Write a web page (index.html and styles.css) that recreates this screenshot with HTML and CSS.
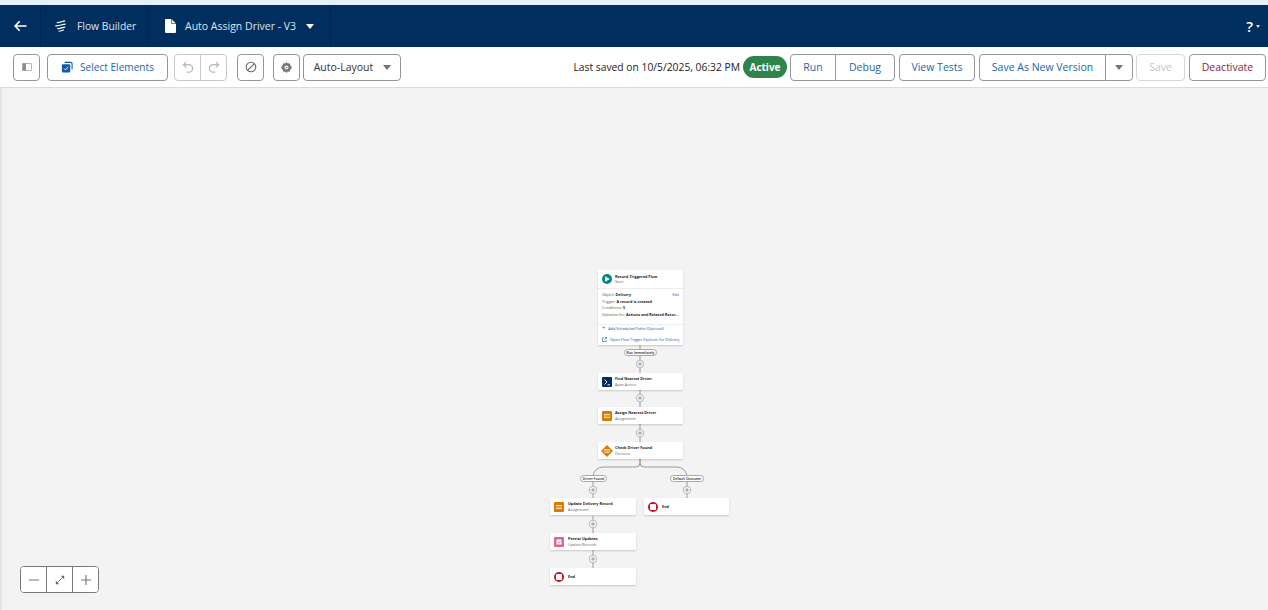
FILE: index.html
```html
<!DOCTYPE html>
<html lang="en">
<head>
    <meta charset="UTF-8">
    <title>Flow Builder</title>
    <link rel="stylesheet" href="styles.css">
</head>
<body>
    <header class="topbar">
        <div class="top-cell back-cell">
            <svg class="ico-back" viewBox="0 0 14 12"><path d="M6 1 1.2 6 6 11M1.5 6H13.500" fill="none" stroke="#fff" stroke-width="1.700"/></svg>
        </div>
        <div class="top-cell app-cell">
            <svg class="ico-flow" viewBox="0 0 14 14"><path d="M3 3.200C6 4 9 1.500 12 1.500M1.500 6.600C5 7.600 8.500 5 12.500 5M3.500 9.600C6 10.500 9 8.200 12 8.200M5 12.600C7 13 9 11.400 10.500 11.200" fill="none" stroke="#fff" stroke-width="1.300"/></svg>
            <span>Flow Builder</span>
        </div>
        <div class="top-cell doc-cell">
            <svg class="ico-doc" viewBox="0 0 11 14"><path d="M0 1a1 1 0 0 1 1-1h5.500L11 4.500V13a1 1 0 0 1-1 1H1a1 1 0 0 1-1-1Z" fill="#fff"/><path d="M6.500 0v4.500H11" fill="none" stroke="#002f5f" stroke-width=".6"/></svg>
            <span>Auto Assign Driver - V3</span>
            <i class="caret caret-white"></i>
        </div>
        <div class="help">?<i class="caret-small"></i></div>
    </header>

    <div class="toolbar">
        <button class="btn btn-icon">
            <svg class="ico-panel" viewBox="0 0 10 8"><rect x=".4" y=".4" width="9.200" height="7.200" rx=".8" fill="#fff" stroke="#9a9a9a" stroke-width=".8"/><rect x=".4" y=".4" width="3.600" height="7.200" fill="#8f8f8f"/></svg>
        </button>
        <button class="btn btn-select">
            <svg class="ico-13" viewBox="0 0 13 13"><path d="M4 1.500h6.500a1.500 1.500 0 0 1 1.500 1.500v6" fill="none" stroke="#0b5cab" stroke-width="1.200"/><rect x="1" y="3.500" width="9" height="9" rx="1.200" fill="#0b5cab"/><path d="M3.300 8 5 9.700 7.800 6.400" fill="none" stroke="#fff" stroke-width="1"/></svg>
            Select Elements
        </button>
        <div class="btn-group undo-group">
            <button class="btn btn-icon is-disabled">
                <svg class="ico-13" viewBox="0 0 13 13"><path d="M4.500 1 1.500 4l3 3M2 4h5.500a4 4 0 0 1 0 8H5" fill="none" stroke="#b8b8b8" stroke-width="1.300"/></svg>
            </button>
            <button class="btn btn-icon is-disabled">
                <svg class="ico-13" viewBox="0 0 13 13"><path d="M8.500 1l3 3-3 3M11 4H5.500a4 4 0 0 0 0 8H8" fill="none" stroke="#b8b8b8" stroke-width="1.300"/></svg>
            </button>
        </div>
        <button class="btn btn-icon btn-stop">
            <svg class="ico-13" viewBox="0 0 13 13"><circle cx="6.500" cy="6.500" r="5.200" fill="none" stroke="#666" stroke-width="1.200"/><path d="M3 10 10 3" stroke="#666" stroke-width="1.200"/></svg>
        </button>
        <button class="btn btn-icon btn-gear">
            <svg class="ico-gear" viewBox="0 0 13 13"><path d="M6.500 0 8 1.800l2.300-.4.700 2.300L13 6.500l-2 2.800-.7 2.300L8 11.200 6.500 13 5 11.200l-2.300.4L2 9.300 0 6.500l2-2.800.7-2.300 2.300.4Z" fill="#777"/><circle cx="6.500" cy="6.500" r="2.300" fill="#fff"/><circle cx="6.500" cy="6.500" r="1" fill="#777"/></svg>
        </button>
        <button class="btn layout-select">Auto-Layout<i class="caret caret-grey"></i></button>

        <div class="toolbar-right">
            <span class="saved">Last saved on 10/5/2025, 06:32 PM</span>
            <span class="status-pill">Active</span>
            <div class="btn-group run-group">
                <button class="btn btn-link btn-run">Run</button>
                <button class="btn btn-link btn-debug">Debug</button>
            </div>
            <button class="btn btn-link btn-tests">View Tests</button>
            <div class="btn-group version-group">
                <button class="btn btn-link btn-version">Save As New Version</button>
                <button class="btn btn-link btn-more"><i class="caret caret-grey"></i></button>
            </div>
            <button class="btn btn-save">Save</button>
            <button class="btn btn-deactivate">Deactivate</button>
        </div>
    </div>

    <main class="canvas">
        <div class="flow">
            <svg class="wires" viewBox="0 0 180 316">
                <g fill="none" stroke="#9a9a9a" stroke-width="1">
                    <path d="M90 75V172"/>
                    <path d="M90 189V193Q90 197 86 197H53a10 10 0 0 0-10 10V228"/>
                    <path d="M90 189V193Q90 197 94 197H127a10 10 0 0 1 10 10V228"/>
                    <path d="M43 246V298"/>
                </g>
                <g class="plus-dots">
                    <circle cx="90" cy="94" r="3.800"/><path d="M88 94h4M90 92v4"/>
                    <circle cx="90" cy="128" r="3.800"/><path d="M88 128h4M90 126v4"/>
                    <circle cx="90" cy="163" r="3.800"/><path d="M88 163h4M90 161v4"/>
                    <circle cx="43" cy="220" r="3.800"/><path d="M41 220h4M43 218v4"/>
                    <circle cx="137" cy="220" r="3.800"/><path d="M135 220h4M137 218v4"/>
                    <circle cx="43" cy="254" r="3.800"/><path d="M41 254h4M43 252v4"/>
                    <circle cx="43" cy="289" r="3.800"/><path d="M41 289h4M43 287v4"/>
                </g>
            </svg>

            <div class="node trigger-card">
                <div class="trigger-head">
                    <span class="round-ico teal"><svg viewBox="0 0 10 10"><path d="M3.200 2.200 7.800 5 3.200 7.800Z" fill="#fff"/></svg></span>
                    <div><div class="node-title">Record-Triggered Flow</div><div class="node-sub">Start</div></div>
                </div>
                <div class="trigger-body">
                    <div class="trigger-row"><span class="muted">Object:</span> <b>Delivery</b><span class="edit">Edit</span></div>
                    <div class="trigger-row"><span class="muted">Trigger:</span> <b>A record is created</b></div>
                    <div class="trigger-row"><span class="muted">Conditions:</span> <b>5</b></div>
                    <div class="trigger-row"><span class="muted">Optimize for:</span> <b>Actions and Related Recor...</b></div>
                </div>
                <div class="trigger-link link-paths"><span class="link-plus">+</span> Add Scheduled Paths (Optional)</div>
                <div class="trigger-link link-explorer">
                    <svg class="ico-open" viewBox="0 0 6 6"><path d="M2.500 1H.6v4.400H5V3.500M3 3 5.500.5M3.800.5h1.700v1.700" fill="none" stroke="#0b5cab" stroke-width=".7"/></svg>
                    Open Flow Trigger Explorer for Delivery
                </div>
            </div>

            <div class="pill-label pill-run">Run Immediately</div>

            <div class="node step n-find">
                <span class="square-ico navy"><svg viewBox="0 0 10 10"><path d="M2.500 2.500 5 5 2.500 7.500M5.500 7.800H8" fill="none" stroke="#fff" stroke-width=".9"/></svg></span>
                <div><div class="node-title">Find Nearest Driver</div><div class="node-sub">Apex Action</div></div>
            </div>
            <div class="node step n-assign">
                <span class="square-ico orange"><svg viewBox="0 0 10 10"><path d="M2 3.800H8M2 6.200H8" stroke="#fff" stroke-width="1.100"/></svg></span>
                <div><div class="node-title">Assign Nearest Driver</div><div class="node-sub">Assignment</div></div>
            </div>
            <div class="node step n-check">
                <span class="diamond-ico"><svg viewBox="0 0 12 12"><path d="M6 0 12 6 6 12 0 6Z" fill="#dd7a01"/><path d="M3 4.500H9M2.500 6H9.500M3.500 7.500H8.500" stroke="#fff" stroke-width=".7"/></svg></span>
                <div><div class="node-title">Check Driver Found</div><div class="node-sub">Decision</div></div>
            </div>

            <div class="pill-label pill-found">Driver Found</div>
            <div class="pill-label pill-default">Default Outcome</div>

            <div class="node step n-update">
                <span class="square-ico orange"><svg viewBox="0 0 10 10"><path d="M2 3.800H8M2 6.200H8" stroke="#fff" stroke-width="1.100"/></svg></span>
                <div><div class="node-title">Update Delivery Record</div><div class="node-sub">Assignment</div></div>
            </div>
            <div class="node step n-end-right">
                <span class="round-ico stop"><i></i></span>
                <div class="node-title">End</div>
            </div>
            <div class="node step n-persist">
                <span class="square-ico pink"><svg viewBox="0 0 10 10"><rect x="2.500" y="2.500" width="5" height="5" rx=".6" fill="#fff"/><path d="M3.800 5.100 5 6.200 6.400 4" fill="none" stroke="#e3609b" stroke-width=".7"/></svg></span>
                <div><div class="node-title">Persist Updates</div><div class="node-sub">Update Records</div></div>
            </div>
            <div class="node step n-end">
                <span class="round-ico stop"><i></i></span>
                <div class="node-title">End</div>
            </div>
        </div>

        <div class="zoom-controls">
            <button class="zoom-btn"><svg viewBox="0 0 12 12"><path d="M1 6H11" stroke="#777" stroke-width="1.200"/></svg></button>
            <button class="zoom-btn"><svg class="zoom-fit" viewBox="0 0 12 12"><path d="M7 1h4v4ZM5 11H1V7Z" fill="#666"/><path d="M3 9 9 3" stroke="#666"/></svg></button>
            <button class="zoom-btn"><svg viewBox="0 0 12 12"><path d="M1 6H11M6 1V11" stroke="#777" stroke-width="1.200"/></svg></button>
        </div>
    </main>
</body>
</html>
```

FILE: styles.css
```css
* { box-sizing: border-box; }
html, body { height: 100%; }
body { margin: 0; height: 610px; overflow: hidden; display: flex; flex-direction: column; font-family: "Open Sans", "Noto Sans", sans-serif; background: #f3f3f3; border-top: 5px solid #e3f1fb; color: #181818; }
button { font-family: inherit; margin: 0; }

/* top navy bar */
.topbar { height: 42px; background: #002f5f; color: #dfe6ee; display: flex; align-items: stretch; font-size: 10.300px; flex: none; }
.top-cell { display: flex; align-items: center; border-right: 1px solid #00264d; }
.back-cell { width: 41px; padding-left: 14px; }
.app-cell { width: 108px; padding-left: 13px; gap: 10px; }
.doc-cell { width: 182px; padding-left: 16px; }
.doc-cell span { margin-left: 9px; font-size: 10.500px; }
.ico-back { width: 13px; height: 12px; }
.ico-flow { width: 13px; height: 14px; }
.ico-doc { width: 11px; height: 14px; }
.caret { display: inline-block; width: 0; height: 0; border-left: 4.500px solid transparent; border-right: 4.500px solid transparent; border-top: 5.500px solid #fff; }
.caret-white { margin-left: 10px; }
.caret-grey { border-top-color: #747474; }
.help { margin-left: auto; padding-right: 8px; display: flex; align-items: center; gap: 3px; font-size: 15px; font-weight: 600; color: #fff; }
.caret-small { width: 0; height: 0; border-left: 2px solid transparent; border-right: 2px solid transparent; border-top: 3px solid #ddd; }

/* toolbar */
.toolbar { height: 41px; flex: none; background: #fff; border-bottom: 1px solid #dcdcdc; display: flex; align-items: center; padding: 0 2px 0 13px; }
.btn { height: 27px; background: #fff; border: 1px solid #969696; border-radius: 4px; font-size: 10.500px; padding: 0; display: flex; align-items: center; justify-content: center; color: #1d66ad; }
.btn-icon { width: 27px; }
.ico-13 { width: 12px; height: 12px; }
.ico-panel { width: 10px; height: 8px; }
.ico-gear { width: 11px; height: 11px; }
.btn-select { width: 121px; margin-left: 7px; gap: 7px; font-size: 10.100px; }
.btn-group { display: flex; }
.btn-group .btn:first-child { border-radius: 4px 0 0 4px; }
.btn-group .btn:last-child { border-radius: 0 4px 4px 0; margin-left: -1px; }
.undo-group { margin-left: 6px; }
.is-disabled { border-color: #c9c9c9; }
.btn-stop { margin-left: 10px; }
.btn-gear { margin-left: 9px; }
.layout-select { width: 98px; margin-left: 3px; color: #333; gap: 10px; padding-left: 1px; }
.toolbar-right { margin-left: auto; display: flex; align-items: center; }
.saved { font-size: 10.300px; color: #222; margin-right: 3px; white-space: nowrap; }
.status-pill { width: 44px; height: 22px; border-radius: 11px; background: #2e844a; color: #fff; font-size: 10px; font-weight: 700; display: flex; align-items: center; justify-content: center; }
.run-group { margin-left: 3px; }
.btn-run { width: 46px; }
.btn-debug { width: 60px; }
.btn-tests { width: 76px; margin-left: 4px; }
.version-group { margin-left: 4px; }
.btn-version { width: 127px; }
.btn-more { width: 28px; }
.btn-save { width: 49px; margin-left: 3px; color: #c4c4c4; border-color: #d8d8d8; }
.btn-deactivate { width: 77px; margin-left: 4px; color: #8e1b3a; }

/* canvas */
.canvas { flex: 1; position: relative; background: #f3f3f3; border-left: 2px solid #e4e4e4; }
.flow { position: absolute; left: 548px; top: 182px; width: 180px; height: 316px; }
.wires { position: absolute; left: 0; top: 0; width: 180px; height: 316px; }
.plus-dots circle { fill: #f3f3f3; stroke: #8c98a5; stroke-width: .6; }
.plus-dots path { stroke: #555; stroke-width: .5; }

.node { position: absolute; background: #fff; box-shadow: 0 1px 2px rgba(0, 0, 0, .18); border-radius: 1px; font-size: 3.800px; line-height: 5.500px; color: #181818; }
.node-title { font-weight: 700; white-space: nowrap; }
.node-sub { color: #666; white-space: nowrap; }
.step { width: 86px; height: 17px; display: flex; align-items: center; gap: 4px; padding-left: 4px; }

.trigger-card { left: 48px; top: 0; width: 85px; height: 75px; }
.trigger-head { height: 19px; display: flex; align-items: center; gap: 3px; padding: 0 4px; border-bottom: 1px solid #ececec; }
.trigger-body { padding: 3px 4px 0; height: 36px; display: flex; flex-direction: column; border-bottom: 1px solid #ececec; }
.trigger-row { height: 6.700px; white-space: nowrap; position: relative; }
.trigger-row b { color: #181818; }
.muted { color: #555; }
.edit { position: absolute; right: 0; color: #0b5cab; }
.trigger-link { color: #0b5cab; white-space: nowrap; display: flex; align-items: center; gap: 3px; }
.link-paths { margin-top: 1px; padding-left: 4px; }
.link-plus { font-size: 5.500px; }
.link-explorer { margin-top: 5px; padding-left: 4px; }
.ico-open { width: 5px; height: 5px; flex: none; }

.round-ico { width: 10px; height: 10px; border-radius: 50%; flex: none; display: flex; align-items: center; justify-content: center; }
.round-ico svg { width: 10px; height: 10px; }
.teal { background: #06857a; }
.stop { background: #c8102e; }
.stop i { width: 6px; height: 6px; background: #fff; border-radius: 1px; }
.square-ico { width: 10px; height: 10px; border-radius: 1px; flex: none; }
.square-ico svg { width: 10px; height: 10px; display: block; }
.navy { background: #032d60; }
.orange { background: #dd7a01; }
.pink { background: #e3609b; }
.diamond-ico { width: 12px; height: 12px; margin-left: -1px; margin-right: -1px; flex: none; }
.diamond-ico svg { width: 12px; height: 12px; display: block; }

.n-find { left: 48px; top: 103px; width: 85px; gap: 3px; }
.n-assign { left: 48px; top: 137px; width: 85px; gap: 3px; }
.n-check { left: 48px; top: 172px; width: 85px; gap: 3px; }
.n-update { left: 0; top: 228px; }
.n-end-right { left: 94px; top: 228px; width: 85px; }
.n-persist { left: 0; top: 263px; }
.n-end { left: 0; top: 298px; }

.pill-label { position: absolute; height: 7px; background: #fff; border: .6px solid #a8a8a8; border-radius: 4px; font-size: 3.400px; line-height: 6px; text-align: center; white-space: nowrap; color: #181818; font-weight: 600; }
.pill-run { left: 74px; top: 79px; width: 33px; }
.pill-found { left: 30px; top: 205px; width: 27px; }
.pill-default { left: 120px; top: 205px; width: 34px; }

/* zoom control */
.zoom-controls { position: absolute; left: 18px; top: 478px; display: flex; height: 27px; border: 1px solid #7a7a7a; border-radius: 4px; background: #fff; overflow: hidden; }
.zoom-btn { width: 26px; height: 25px; background: #fff; border: 0; border-right: 1px solid #7a7a7a; padding: 0; display: flex; align-items: center; justify-content: center; }
.zoom-btn:last-child { border-right: 0; width: 25px; }
.zoom-btn svg { width: 12px; height: 12px; }
.zoom-btn .zoom-fit { width: 10px; height: 10px; }
```
